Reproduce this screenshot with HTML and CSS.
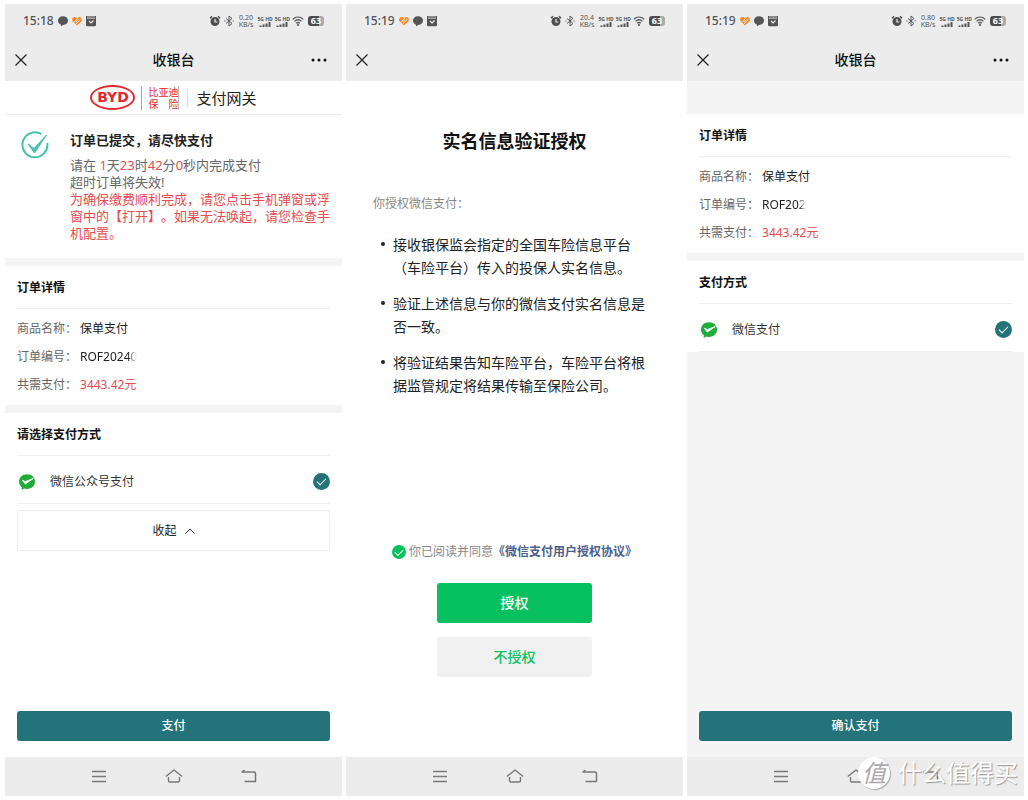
FILE: index.html
```html
<!DOCTYPE html>
<html lang="zh-CN">
<head>
<meta charset="utf-8">
<meta name="viewport" content="width=device-width, initial-scale=1">
<title>收银台</title>
<link rel="stylesheet" href="styles.css">
</head>
<body>
<svg class="defs" aria-hidden="true">
  <symbol id="bubble" viewBox="0 0 12 12"><path d="M6 1.200c3 0 5 1.900 5 4.300S9 9.900 6 9.900L4.300 11.300 3.700 9.500C2 8.800 1 7.300 1 5.500 1 3.100 3 1.200 6 1.200z" fill="#555"/></symbol>
  <symbol id="heart" viewBox="0 0 12 12"><path d="M6 10.500L2 6.800C.2 5 1.300 2 3.600 2 4.700 2 5.500 2.600 6 3.300 6.500 2.600 7.300 2 8.400 2c2.300 0 3.400 3 1.600 4.800z" fill="#f58a2c"/><path d="M2.600 7.800L7.200 2.800M5 6.900L7 4.700M4.400 9.600L9.400 4.200" stroke="#ececec" stroke-width=".9" fill="none"/></symbol>
  <symbol id="box" viewBox="0 0 12 12"><path d="M1.500 1h9v2h-9z" fill="#888"/><rect x="1" y="3.400" width="10" height="7.800" rx="1.500" fill="#555"/><path d="M1.500 1v9M10.500 1v9" stroke="#555"/><path d="M4 6l2 2 2.500-2.500" fill="none" stroke="#eee" stroke-width="1.200"/></symbol>
  <symbol id="alarm" viewBox="0 0 12 12"><circle cx="6" cy="6.500" r="4.500" fill="#505050"/><path d="M1 3.300L3 1.300M11 3.300L9 1.300" stroke="#505050" stroke-width="1.500"/><path d="M6 4v3h2.300" fill="none" stroke="#ececec" stroke-width="1.200"/></symbol>
  <symbol id="bt" viewBox="0 0 12 12"><path d="M3 3.500l6 5L6 11V1l3 2.500-6 5" fill="none" stroke="#555"/><path d="M1 6h1.500M9.500 6H11" stroke="#777" stroke-width="1.200"/></symbol>
  <symbol id="bars" viewBox="0 0 12 5"><path d="M1.500 5V3.500M4.500 5V2.500M7.500 5V1.500M10.500 5V0" stroke="#555" stroke-width="2"/></symbol>
  <symbol id="wifi" viewBox="0 0 12 12"><g fill="none" stroke="#555" stroke-width="1.300"><path d="M.7 4.400c3.200-3 7.400-3 10.600 0"/><path d="M2.500 6.400c2.100-2 4.900-2 7 0"/><path d="M4.200 8.300c1.100-1 2.500-1 3.600 0"/></g><circle cx="6" cy="10" r="1.100" fill="#555"/></symbol>
  <symbol id="close" viewBox="0 0 12 12"><path d="M.5.500l11 11M11.500.500l-11 11" stroke="#222" stroke-width="1.200" fill="none"/></symbol>
  <symbol id="more" viewBox="0 0 16 4"><g fill="#111"><circle cx="2" cy="2" r="1.500"/><circle cx="8" cy="2" r="1.500"/><circle cx="14" cy="2" r="1.500"/></g></symbol>
  <symbol id="menu" viewBox="0 0 18 16"><path d="M2 2.500h14M2 7.500h14M2 12.500h14" stroke="#777" stroke-width="1.500" fill="none"/></symbol>
  <symbol id="home" viewBox="0 0 18 16"><path d="M.8 7.500L9 1 17.200 7.500M3.500 8v3.500q0 1.500 1.500 1.500h8q1.500 0 1.500-1.500V8" stroke="#777" stroke-width="1.400" fill="none" stroke-linejoin="round"/></symbol>
  <symbol id="back" viewBox="0 0 18 16"><path d="M4.500 1L2 3h12q1.500 0 1.500 1.500V12.500H4.500" stroke="#777" stroke-width="1.500" fill="none" stroke-linejoin="round"/></symbol>
  <symbol id="wepay" viewBox="0 0 18 18"><path d="M9 1.200c4.700 0 8 3.100 8 7.300 0 4.300-3.400 7.400-8 7.400-1 0-2-.2-2.800-.4L3.600 17l.3-2.700C2.200 13 1 11 1 8.500c0-4.200 3.300-7.300 8-7.300z" fill="#21ac38"/><path d="M4.500 7.400l2.900 1.300L15.300 5.400 7.400 11z" fill="#fff" stroke="#fff" stroke-linejoin="round"/></symbol>
</svg>

<main class="phones">
  <section class="phone">
    <header class="top">
      <div class="status">
        <span class="clock">15:18</span>
        <svg class="s-icon"><use href="#bubble"/></svg><svg class="s-icon"><use href="#heart"/></svg><svg class="s-icon"><use href="#box"/></svg>
        <div class="signals">
          <svg class="s-icon"><use href="#alarm"/></svg><svg class="s-icon"><use href="#bt"/></svg>
          <span class="speed">0.20<br>KB/s</span>
          <span class="sim">5G HD<svg class="bars"><use href="#bars"/></svg></span><span class="sim">5G HD<svg class="bars"><use href="#bars"/></svg></span>
          <svg class="s-icon"><use href="#wifi"/></svg><span class="battery">63</span>
        </div>
      </div>
      <div class="title-bar">
        <button class="icon-btn" aria-label="关闭"><svg class="close"><use href="#close"/></svg></button>
        <h1 class="title">收银台</h1>
        <button class="icon-btn" aria-label="更多"><svg class="more"><use href="#more"/></svg></button>
      </div>
    </header>
    <div class="content">
      <div class="brand">
        <span class="byd">BYD</span>
        <span class="insurance"><span>比亚迪</span><span class="spread"><span>保</span><span>险</span></span></span>
        <span class="gateway">支付网关</span>
      </div>
      <div class="notice">
        <svg class="done" viewBox="0 0 28 28"><path d="M20.500 3.200A12.500 12.500 0 1 0 26.300 12" fill="none" stroke="#45c1ad" stroke-width="2"/><path d="M7 13l6 4.500L25.500 4 13.500 22z" fill="#45c1ad" stroke="#45c1ad" stroke-linejoin="round"/></svg>
        <div class="notice-body">
          <h2 class="notice-title">订单已提交，请尽快支付</h2>
          <p class="countdown">请在 <b>1</b>天<b>23</b>时<b>42</b>分<b>0</b>秒内完成支付<br>超时订单将失效!</p>
          <p class="warning">为确保缴费顺利完成，请您点击手机弹窗或浮窗中的【打开】。如果无法唤起，请您检查手机配置。</p>
        </div>
      </div>
      <div class="block">
        <h2 class="block-title">订单详情</h2>
        <dl class="details">
          <dt>商品名称：</dt><dd>保单支付</dd>
          <dt>订单编号：</dt><dd><span class="faded">ROF20240</span></dd>
          <dt>共需支付：</dt><dd class="price">3443.42元</dd>
        </dl>
      </div>
      <div class="block">
        <h2 class="block-title">请选择支付方式</h2>
        <label class="method"><svg class="wepay"><use href="#wepay"/></svg><span class="method-name">微信公众号支付</span><input class="tick" type="radio" name="method-a" checked></label>
        <button class="collapse">收起 <svg class="caret" viewBox="0 0 10 6"><path d="M.5 5.500L5 1l4.500 4.500" fill="none" stroke="#333"/></svg></button>
      </div>
      <button class="pay">支付</button>
    </div>
    <nav class="system">
      <button class="icon-btn" aria-label="任务"><svg class="n-icon"><use href="#menu"/></svg></button>
      <button class="icon-btn" aria-label="主页"><svg class="n-icon"><use href="#home"/></svg></button>
      <button class="icon-btn" aria-label="返回"><svg class="n-icon"><use href="#back"/></svg></button>
    </nav>
  </section>

  <section class="phone">
    <header class="top">
      <div class="status">
        <span class="clock">15:19</span>
        <svg class="s-icon"><use href="#heart"/></svg><svg class="s-icon"><use href="#bubble"/></svg><svg class="s-icon"><use href="#box"/></svg>
        <div class="signals">
          <svg class="s-icon"><use href="#alarm"/></svg><svg class="s-icon"><use href="#bt"/></svg>
          <span class="speed">20.4<br>KB/s</span>
          <span class="sim">5G HD<svg class="bars"><use href="#bars"/></svg></span><span class="sim">5G HD<svg class="bars"><use href="#bars"/></svg></span>
          <svg class="s-icon"><use href="#wifi"/></svg><span class="battery">63</span>
        </div>
      </div>
      <div class="title-bar">
        <button class="icon-btn" aria-label="关闭"><svg class="close"><use href="#close"/></svg></button>
      </div>
    </header>
    <div class="content consent">
      <h1 class="consent-title">实名信息验证授权</h1>
      <p class="consent-lead">你授权微信支付：</p>
      <ul class="terms">
        <li>接收银保监会指定的全国车险信息平台（车险平台）传入的投保人实名信息。</li>
        <li>验证上述信息与你的微信支付实名信息是否一致。</li>
        <li>将验证结果告知车险平台，车险平台将根据监管规定将结果传输至保险公司。</li>
      </ul>
      <div class="agree">
        <input class="tick small" type="checkbox" id="agree" checked><label for="agree">你已阅读并同意</label><a class="agree-link" href="#">《微信支付用户授权协议》</a>
      </div>
      <button class="choice primary">授权</button>
      <button class="choice">不授权</button>
    </div>
    <nav class="system">
      <button class="icon-btn" aria-label="任务"><svg class="n-icon"><use href="#menu"/></svg></button>
      <button class="icon-btn" aria-label="主页"><svg class="n-icon"><use href="#home"/></svg></button>
      <button class="icon-btn" aria-label="返回"><svg class="n-icon"><use href="#back"/></svg></button>
    </nav>
  </section>

  <section class="phone">
    <header class="top">
      <div class="status">
        <span class="clock">15:19</span>
        <svg class="s-icon"><use href="#heart"/></svg><svg class="s-icon"><use href="#bubble"/></svg><svg class="s-icon"><use href="#box"/></svg>
        <div class="signals">
          <svg class="s-icon"><use href="#alarm"/></svg><svg class="s-icon"><use href="#bt"/></svg>
          <span class="speed">0.80<br>KB/s</span>
          <span class="sim">5G HD<svg class="bars"><use href="#bars"/></svg></span><span class="sim">5G HD<svg class="bars"><use href="#bars"/></svg></span>
          <svg class="s-icon"><use href="#wifi"/></svg><span class="battery">63</span>
        </div>
      </div>
      <div class="title-bar">
        <button class="icon-btn" aria-label="关闭"><svg class="close"><use href="#close"/></svg></button>
        <h1 class="title">收银台</h1>
        <button class="icon-btn" aria-label="更多"><svg class="more"><use href="#more"/></svg></button>
      </div>
    </header>
    <div class="content confirm">
      <div class="block">
        <h2 class="block-title">订单详情</h2>
        <dl class="details">
          <dt>商品名称：</dt><dd>保单支付</dd>
          <dt>订单编号：</dt><dd><span class="faded">ROF202</span></dd>
          <dt>共需支付：</dt><dd class="price">3443.42元</dd>
        </dl>
      </div>
      <div class="block">
        <h2 class="block-title">支付方式</h2>
        <label class="method"><svg class="wepay"><use href="#wepay"/></svg><span class="method-name">微信支付</span><input class="tick" type="radio" name="method-b" checked></label>
      </div>
      <button class="pay">确认支付</button>
    </div>
    <nav class="system">
      <button class="icon-btn" aria-label="任务"><svg class="n-icon"><use href="#menu"/></svg></button>
      <button class="icon-btn" aria-label="主页"><svg class="n-icon"><use href="#home"/></svg></button>
      <button class="icon-btn" aria-label="返回"><svg class="n-icon"><use href="#back"/></svg></button>
    </nav>
    <div class="watermark"><span class="seal">值</span><span>什么值得买</span></div>
  </section>
</main>
</body>
</html>
```

FILE: styles.css
```css
* { box-sizing: border-box; }

body {
  margin: 0;
  background: #fff;
  color: #222;
  font: 12px/18px "Noto Sans", "Noto Sans CJK SC", sans-serif;
  text-spacing-trim: space-all;
}

h1, h2, p, ul, dl, dd { margin: 0; padding: 0; }

button {
  margin: 0;
  padding: 0;
  border: 0;
  background: none;
  color: inherit;
  font: inherit;
  cursor: pointer;
}

svg { display: block; flex: none; }

.defs { position: absolute; width: 0; height: 0; }

.phones {
  display: grid;
  grid-template-columns: repeat(3, 1fr);
  gap: 4px;
  min-height: 100vh;
  padding: 4px 4px 4px 5px;
}

.phone {
  position: relative;
  display: flex;
  flex-direction: column;
  min-width: 0;
}

/* Status bar and title bar */
.top { background: #ececec; }

.status {
  display: flex;
  align-items: center;
  gap: 2px;
  height: 34px;
  padding: 0 18px;
  color: #555;
}

.clock { margin-right: 1px; font-weight: 500; }
.s-icon { width: 12px; height: 12px; }

.signals {
  display: flex;
  align-items: center;
  gap: 2px;
  margin-left: auto;
}

.speed {
  margin: 0 2px;
  font-size: 7px;
  line-height: 7px;
  text-align: center;
}

.sim {
  display: flex;
  flex-direction: column;
  align-items: center;
  font-size: 5px;
  font-weight: 700;
  line-height: 6px;
}

.bars { width: 12px; height: 5px; }

.battery {
  width: 16px;
  height: 10px;
  margin-left: 2px;
  border-radius: 3px;
  background: linear-gradient(90deg, #4c4c4c 70%, #aaa 70%);
  color: #fff;
  font-size: 9px;
  font-weight: 700;
  line-height: 10px;
  text-align: center;
}

.title-bar {
  display: grid;
  grid-template-columns: 1fr auto 1fr;
  align-items: center;
  height: 43px;
  padding: 0 10px;
}

.icon-btn { display: flex; }
.icon-btn:last-child:not(:first-child) { justify-self: end; }
.close { width: 12px; height: 12px; }
.more { width: 16px; height: 4px; margin-right: 5px; }
.title { color: #111; font-size: 14px; font-weight: 500; }

.content {
  display: flex;
  flex: 1;
  flex-direction: column;
}

/* Brand row */
.brand {
  display: flex;
  align-items: center;
  justify-content: center;
  height: 34px;
  border-bottom: 1px solid #eee;
}

.byd {
  width: 45px;
  height: 25px;
  border: 2px solid #e02a2e;
  border-radius: 50%;
  color: #e02a2e;
  font: 700 14px/21px "DejaVu Sans", sans-serif;
  text-align: center;
}

.insurance {
  margin-left: 6px;
  padding: 0 0 0 6px;
  border-left: 1px solid #e8888a;
  border-right: 1px solid #bbb;
  color: #e02a2e;
  font-size: 10px;
  line-height: 12px;
}

.spread { display: flex; justify-content: space-between; }

.gateway {
  margin-left: 8px;
  padding-left: 8px;
  border-left: 1px solid #ddd;
  font-size: 15px;
}

/* Submitted notice */
.notice {
  display: flex;
  gap: 21px;
  padding: 14px 6px 16px 16px;
}

.done { width: 28px; height: 28px; margin-top: 2px; }

.notice-title {
  margin-bottom: 6px;
  font-size: 13px;
  font-weight: 700;
  line-height: 22px;
}

.countdown,
.warning { font-size: 13px; line-height: 17px; }

.countdown { color: #666; }
.countdown b { color: #e64c50; font-weight: 400; }
.warning { color: #e64c50; }

/* Order blocks */
.block { padding: 0 12px; background: #fff; }
.notice + .block, .block + .block { border-top: 8px solid #f4f4f4; }

.block-title {
  padding-top: 2px;
  border-bottom: 1px solid #eee;
  color: #111;
  font-size: 12px;
  font-weight: 700;
  line-height: 40px;
}

.details {
  display: grid;
  grid-template-columns: auto 1fr;
  column-gap: 3px;
  padding: 6px 0;
  line-height: 28px;
}

.details dt { color: #666; }
.details .price { color: #e64c50; }

.faded {
  -webkit-mask-image: linear-gradient(90deg, #000 84%, transparent);
  mask-image: linear-gradient(90deg, #000 84%, transparent);
}

.method {
  display: flex;
  align-items: center;
  height: 48px;
  padding-top: 4px;
  border-bottom: 1px solid #eee;
  color: #333;
}

.wepay { width: 18px; height: 18px; margin: 0 14px 0 1px; }
.method-name { flex: 1; }

.tick {
  display: grid;
  place-items: center;
  width: 17px;
  height: 17px;
  margin: 0;
  border-radius: 50%;
  background: #24737a;
  appearance: none;
}

.tick::after {
  width: 8px;
  height: 4px;
  margin-bottom: 2px;
  border: solid #fff;
  border-width: 0 0 1px 1px;
  content: "";
  transform: rotate(-45deg);
}

.tick.small { width: 14px; height: 14px; background: #07c160; }
.tick.small::after { width: 7px; }

.collapse {
  display: flex;
  align-items: center;
  justify-content: center;
  gap: 8px;
  width: 100%;
  height: 41px;
  margin-top: 6px;
  border: 1px solid #eee;
  border-radius: 3px;
}

.caret { width: 10px; height: 6px; }

.pay {
  height: 30px;
  margin: auto 12px 16px;
  border-radius: 3px;
  background: #24737a;
  color: #fff;
  font-weight: 500;
}

.confirm { padding-top: 33px; background: #f4f4f4; }

/* Consent page */
.consent { align-items: center; padding: 47px 27px 80px; }

.consent-title {
  color: #111;
  font-size: 18px;
  font-weight: 700;
  line-height: 26px;
}

.consent-lead { align-self: stretch; margin-top: 41px; color: #888; }

.terms {
  align-self: stretch;
  margin-top: 20px;
  padding-left: 20px;
  font-size: 14px;
  line-height: 23px;
  list-style: none;
}

.terms li { position: relative; }
.terms li + li { margin-top: 13px; }

.terms li::before {
  position: absolute;
  top: 9px;
  left: -12px;
  width: 4px;
  height: 4px;
  border-radius: 50%;
  background: #222;
  content: "";
}

.agree {
  display: flex;
  align-items: center;
  margin-top: auto;
  margin-bottom: 21px;
  color: #888;
  line-height: 20px;
  white-space: nowrap;
}

.agree label { margin-left: 3px; }
.agree-link { color: #4c5f8e; font-weight: 700; text-decoration: none; }

.choice {
  width: 155px;
  height: 40px;
  border-radius: 3px;
  background: #f1f1f1;
  color: #07c160;
  font-size: 14px;
  font-weight: 500;
}

.choice + .choice { margin-top: 14px; }
.choice.primary { background: #07c160; color: #fff; }

/* System navigation */
.system {
  display: flex;
  align-items: center;
  justify-content: center;
  gap: 57px;
  height: 39px;
  background: #ececec;
}

.n-icon { width: 18px; height: 16px; }

.watermark {
  position: absolute;
  right: 6px;
  bottom: 7px;
  display: flex;
  align-items: center;
  gap: 8px;
  color: #fff;
  font-size: 24px;
  line-height: 32px;
  text-shadow: 1px 1px 1px #999;
}

.seal {
  width: 32px;
  height: 32px;
  border-radius: 50%;
  background: #fff;
  box-shadow: 1px 1px 1px #aaa;
  color: #aaa;
  font-style: italic;
  text-align: center;
  text-shadow: none;
}
```
